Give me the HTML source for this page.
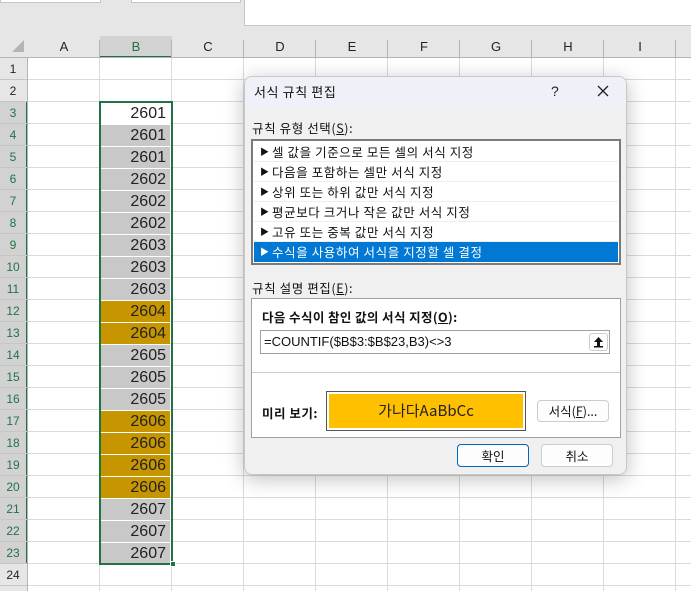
<!DOCTYPE html>
<html><head><meta charset="utf-8"><style>
*{box-sizing:border-box;margin:0;padding:0}
body{width:691px;height:591px;overflow:hidden;background:#fff;font-family:"Liberation Sans","Noto Sans CJK KR",sans-serif;position:relative}
.a{position:absolute}
.ko{font-family:"Noto Sans CJK KR","Liberation Sans",sans-serif}
.it{height:20px;line-height:20px;padding-left:6px;border-bottom:1px solid #eee;overflow:hidden;letter-spacing:0.6px;white-space:nowrap}
.tr{font-size:9px;display:inline-block;width:12px;vertical-align:top}
</style></head><body>
<div class="a" style="left:0;top:0;width:691px;height:36px;background:#e6e6e6"></div>
<div class="a" style="left:0;top:0;width:101px;height:3px;background:#fff;border:1px solid #c6c6c6;border-top:0"></div>
<div class="a" style="left:131px;top:0;width:110px;height:3px;background:#fff;border:1px solid #c6c6c6;border-top:0"></div>
<div class="a" style="left:244px;top:0;width:447px;height:26px;background:#fff;border-left:1px solid #c6c6c6;border-bottom:1px solid #c6c6c6"></div>
<svg class="a" style="left:0;top:36px" width="691" height="555">
<rect x="0" y="0" width="691" height="22" fill="#e6e6e6"/>
<rect x="100" y="0" width="72" height="22" fill="#d2d2d2"/>
<rect x="100" y="20" width="72" height="2" fill="#217346"/>
<line x1="0" y1="21.5" x2="691" y2="21.5" stroke="#b4b4b4"/>
<polygon points="12,16 24,16 24,4" fill="#b4b4b4"/>
<rect x="0" y="22" width="27" height="533" fill="#e6e6e6"/>
<rect x="0" y="66" width="27" height="462" fill="#d2d2d2"/>
<rect x="26" y="66" width="2" height="462" fill="#217346"/>
<line x1="27.5" y1="22" x2="27.5" y2="555" stroke="#b4b4b4"/>
<g stroke="#b4b4b4"><line x1="99.5" y1="4" x2="99.5" y2="21"/><line x1="171.5" y1="4" x2="171.5" y2="21"/><line x1="243.5" y1="4" x2="243.5" y2="21"/><line x1="315.5" y1="4" x2="315.5" y2="21"/><line x1="387.5" y1="4" x2="387.5" y2="21"/><line x1="459.5" y1="4" x2="459.5" y2="21"/><line x1="531.5" y1="4" x2="531.5" y2="21"/><line x1="603.5" y1="4" x2="603.5" y2="21"/><line x1="675.5" y1="4" x2="675.5" y2="21"/></g>
<g stroke="#dadada"><line x1="99.5" y1="22" x2="99.5" y2="555"/><line x1="171.5" y1="22" x2="171.5" y2="555"/><line x1="243.5" y1="22" x2="243.5" y2="555"/><line x1="315.5" y1="22" x2="315.5" y2="555"/><line x1="387.5" y1="22" x2="387.5" y2="555"/><line x1="459.5" y1="22" x2="459.5" y2="555"/><line x1="531.5" y1="22" x2="531.5" y2="555"/><line x1="603.5" y1="22" x2="603.5" y2="555"/><line x1="675.5" y1="22" x2="675.5" y2="555"/></g>
<g font-family="Liberation Sans" font-size="13" fill="#222" text-anchor="middle">
<text x="64" y="15">A</text><text x="136" y="15" fill="#217346">B</text><text x="208" y="15">C</text><text x="280" y="15">D</text><text x="352" y="15">E</text><text x="424" y="15">F</text><text x="496" y="15">G</text><text x="568" y="15">H</text><text x="640" y="15">I</text>
</g>
</svg>
<div id="sheet"></div>
<script>
var s='',vals=['2601','2601','2601','2602','2602','2602','2603','2603','2603','2604','2604','2605','2605','2605','2606','2606','2606','2606','2607','2607','2607'];
for(var r=1;r<=24;r++){var y=58+(r-1)*22;
s+='<div class="a" style="left:28px;top:'+(y+21)+'px;width:663px;height:1px;background:#dadada"></div>';
s+='<div class="a" style="left:0;top:'+(y+21)+'px;width:27px;height:1px;background:#c6c6c6"></div>';
s+='<div class="a" style="left:0;top:'+y+'px;width:26px;height:22px;line-height:22px;font-size:12px;text-align:center;color:'+(r>=3&&r<=23?'#217346':'#222')+'">'+r+'</div>';
if(r>=3&&r<=23){var v=vals[r-3];var n=+v;var bg=r==3?'#fff':((n==2604||n==2606)?'#c79500':'#c8c8c8');
s+='<div class="a" style="left:101px;top:'+(y+1)+'px;width:69px;height:21px;background:'+bg+';font-size:16px;line-height:21px;text-align:right;padding-right:4px;color:#222">'+v+'</div>';}}
document.getElementById('sheet').innerHTML=s;
</script>
<div class="a" style="left:99px;top:101px;width:74px;height:464px;border:2px solid #217346"></div>
<div class="a" style="left:170px;top:561px;width:6px;height:6px;background:#217346;border:1px solid #fff"></div>

<div class="a" style="left:244px;top:76px;width:383px;height:399px;background:#f0f0f0;border:1px solid #c8c8c8;border-radius:8px;box-shadow:0 4px 20px rgba(0,0,0,.25);overflow:hidden">
<div class="a ko" style="left:0;top:0;width:383px;height:31px;background:#eef2f8;font-size:13px;line-height:30px;padding-left:9px;color:#111;letter-spacing:0.6px">서식 규칙 편집</div>
<div class="a" style="left:306px;top:6px;font-size:14px;color:#222">?</div>
<svg class="a" style="left:352px;top:8px" width="12" height="12"><path d="M1 1L11 11M11 1L1 11" stroke="#222" stroke-width="1.3"/></svg>
<div class="a ko" style="left:7px;top:41px;font-size:12.5px;color:#111;letter-spacing:0.6px">규칙 유형 선택(<u>S</u>):</div>
<div class="a" style="left:6px;top:62px;width:370px;height:126px;background:#fff;border:2px solid #7a7a7a;padding:1px">
<div class="ko" style="font-size:12.5px;color:#111">
<div class="it"><span class="tr">▶</span>셀 값을 기준으로 모든 셀의 서식 지정</div>
<div class="it"><span class="tr">▶</span>다음을 포함하는 셀만 서식 지정</div>
<div class="it"><span class="tr">▶</span>상위 또는 하위 값만 서식 지정</div>
<div class="it"><span class="tr">▶</span>평균보다 크거나 작은 값만 서식 지정</div>
<div class="it"><span class="tr">▶</span>고유 또는 중복 값만 서식 지정</div>
<div class="it" style="background:#0078d4;color:#fff;border:0"><span class="tr">▶</span>수식을 사용하여 서식을 지정할 셀 결정</div>
</div></div>
<div class="a ko" style="left:7px;top:201px;font-size:12.5px;color:#111;letter-spacing:0.6px">규칙 설명 편집(<u>E</u>):</div>
<div class="a" style="left:6px;top:221px;width:370px;height:140px;background:#fff;border:1px solid #a0a0a0">
<div class="a ko" style="left:10px;top:8px;font-size:12.5px;font-weight:bold;color:#111;letter-spacing:0.4px">다음 수식이 참인 값의 서식 지정(<u>O</u>):</div>
<div class="a" style="left:8px;top:31px;width:350px;height:24px;border:1px solid #a0a0a0;font-size:13px;line-height:22px;padding-left:3px;color:#111">=COUNTIF($B$3:$B$23,B3)&lt;&gt;3</div>
<div class="a" style="left:337px;top:34px;width:19px;height:18px;border:1px solid #ccc;border-radius:3px;background:#fdfdfd"><svg width="17" height="16"><path d="M8.5 3L4 8H7V12H10V8H13Z" fill="#111"/><rect x="4" y="12" width="9" height="1.5" fill="#111"/></svg></div>
<div class="a" style="left:0;top:73px;width:368px;height:1px;background:#ccc"></div>
<div class="a ko" style="left:10px;top:104px;font-size:12.5px;font-weight:bold;color:#111;letter-spacing:0.5px">미리 보기:</div>
<div class="a" style="left:74px;top:92px;width:200px;height:40px;border:1px solid #555;padding:2px"><div class="ko" style="background:#ffc000;height:34px;line-height:34px;text-align:center;font-size:15px;color:#222">가나다AaBbCc</div></div>
<div class="a ko" style="left:285px;top:101px;width:72px;height:22px;border:1px solid #ccc;border-radius:4px;background:#fdfdfd;font-size:12.5px;line-height:20px;text-align:center;color:#111">서식(<u>F</u>)...</div>
</div>
<div class="a ko" style="left:212px;top:367px;width:72px;height:23px;border:1px solid #0067c0;border-radius:4px;background:#fdfdfd;font-size:12.5px;line-height:21px;text-align:center;color:#111">확인</div>
<div class="a ko" style="left:296px;top:367px;width:72px;height:23px;border:1px solid #ccc;border-radius:4px;background:#fdfdfd;font-size:12.5px;line-height:21px;text-align:center;color:#111">취소</div>
</div>
</body></html>
